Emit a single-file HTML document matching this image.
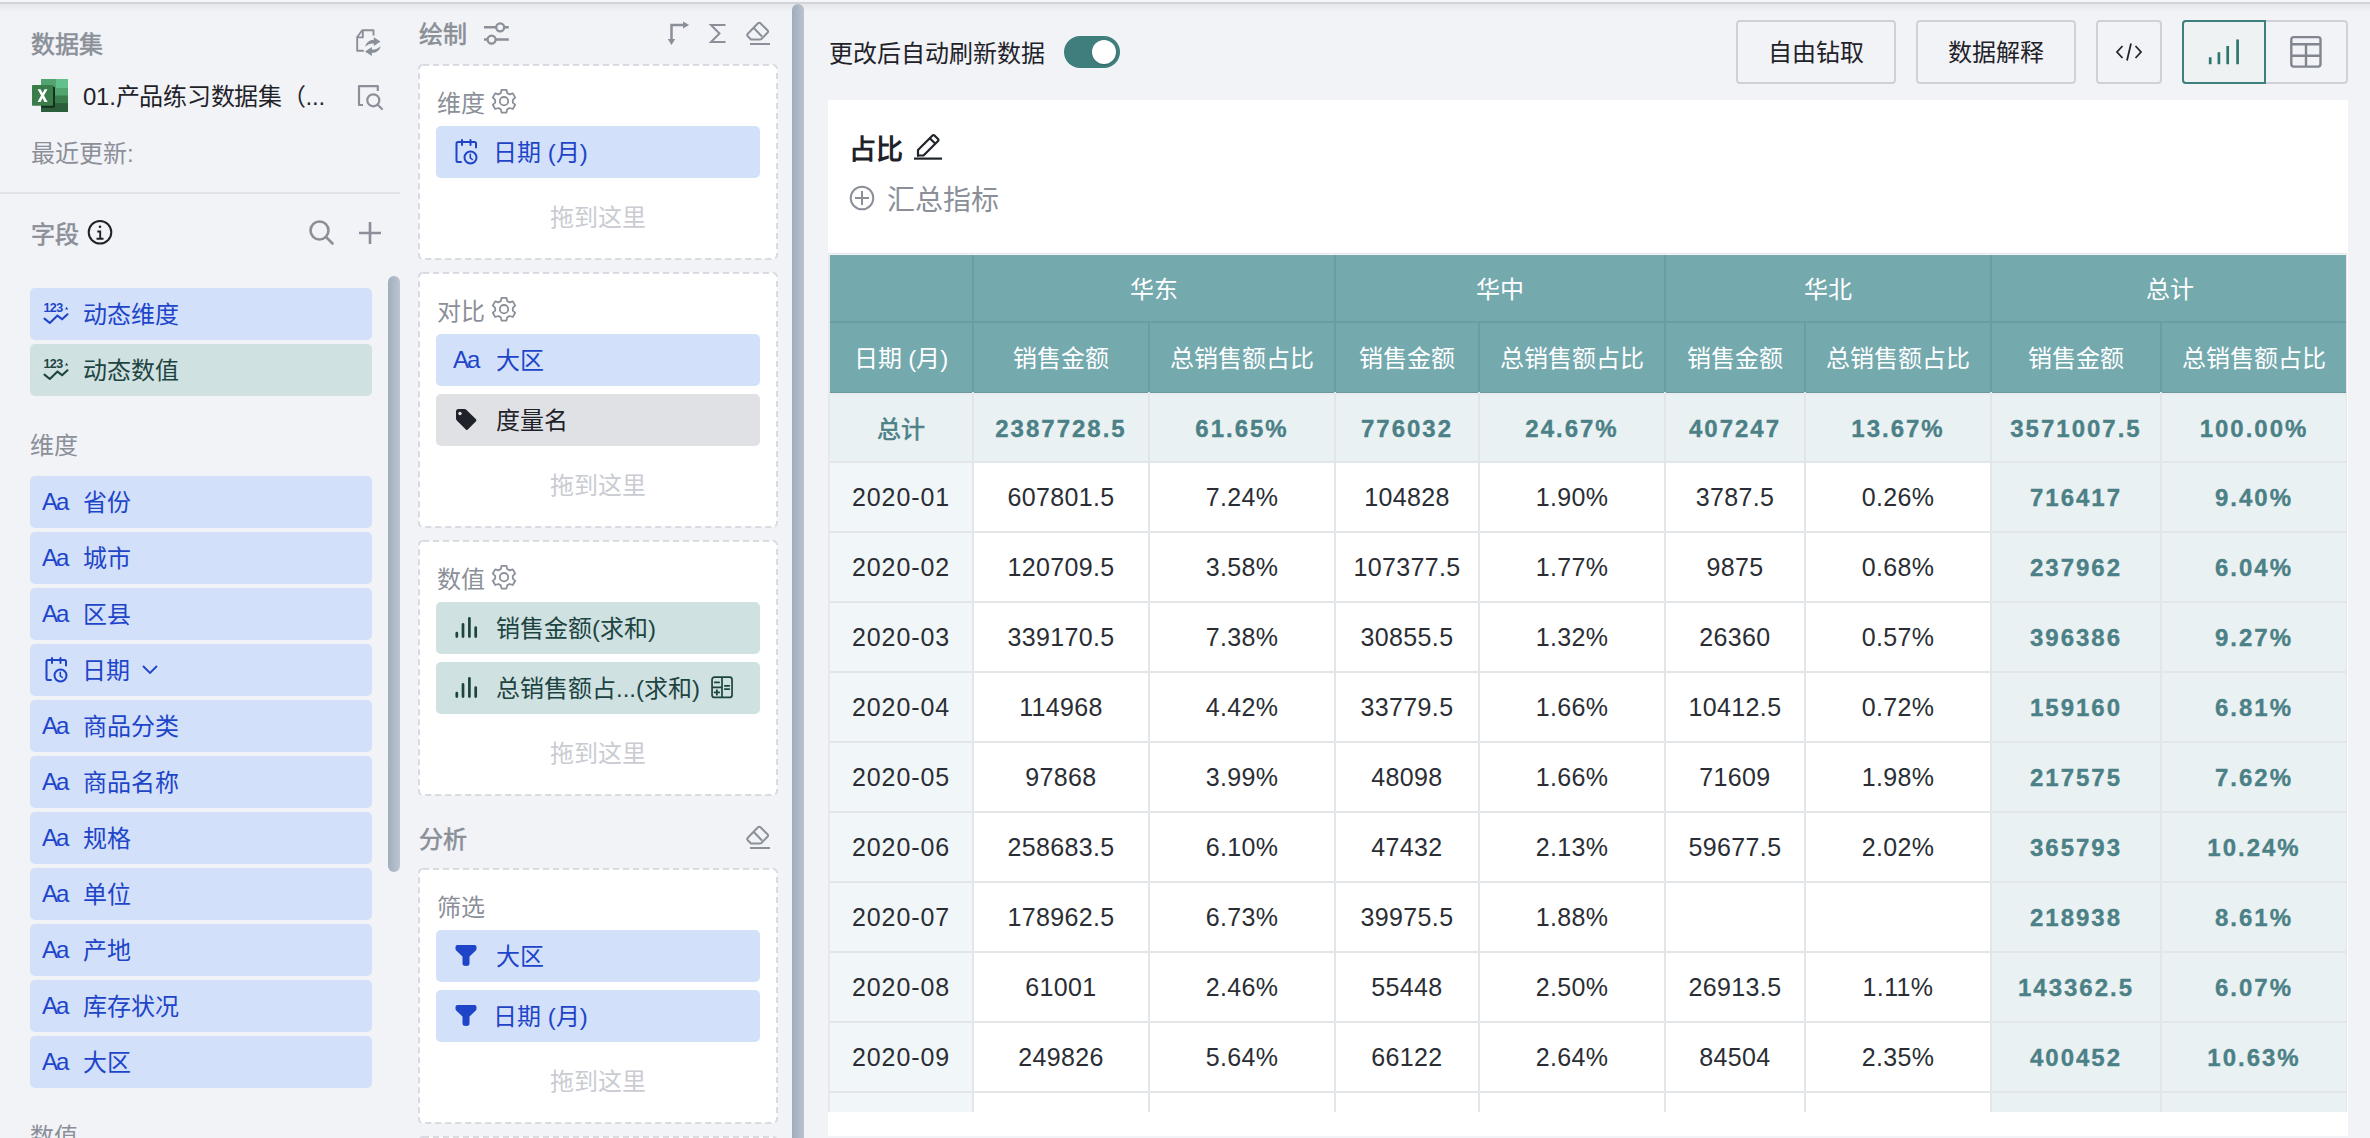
<!DOCTYPE html>
<html lang="zh-CN"><head><meta charset="utf-8">
<style>
*{box-sizing:border-box;margin:0;padding:0}
html,body{width:2370px;height:1138px;overflow:hidden;background:#f2f3f7;font-family:"Liberation Sans",sans-serif;}
.t{position:absolute;white-space:nowrap}
.s{position:absolute;overflow:visible}
.r{position:absolute}
.c{position:absolute;text-align:center;white-space:nowrap}
</style></head><body>

<div class="r" style="left:0px;top:0px;width:2370px;height:2px;background:#f5f6f9;"></div>
<div class="r" style="left:0px;top:2px;width:2370px;height:2px;background:#d1d4d9;"></div>
<div class="r" style="left:0px;top:4px;width:2370px;height:8px;background:linear-gradient(#e5e7eb,#f2f3f7);"></div>
<div class="t" style="left:31px;top:33px;font-size:24px;line-height:24px;color:#8a8f98;font-weight:normal;-webkit-text-stroke:0.6px #8a8f98;">数据集</div>
<svg class="s" style="left:352px;top:25px;" width="34" height="34" viewBox="0 0 34 34">
<path d="M21.5 10.5 V5.2 H10.2 L5.2 12 V25.7 H11.8 M10.8 5.2 V12.4 H5.2" fill="none" stroke="#8a8f98" stroke-width="1.9" stroke-linejoin="round"/>
<path d="M13.1 21.8 Q14.8 15.2 21.8 14.8 V12.2 L28.5 16.5 L21.8 20.9 V18.4 Q16.8 18.2 13.1 21.8 Z" fill="#8a8f98"/>
<path d="M28.8 21 Q27.2 27.7 19.8 28.1 V31.1 L13 26.5 L19.8 22.1 V24.6 Q25.2 24.7 28.8 21 Z" fill="#8a8f98"/>
</svg>
<svg class="s" style="left:32px;top:79px;" width="37" height="34" viewBox="0 0 37 34">
<rect x="9" y="0" width="27" height="33" fill="#2b5e3b"/>
<rect x="9" y="0" width="15" height="9" fill="#52a370"/>
<rect x="24" y="0" width="12" height="9" fill="#62c18a"/>
<rect x="9" y="9" width="27" height="7.8" fill="#50a46e"/>
<rect x="9" y="16.8" width="27" height="7.3" fill="#3a7e4c"/>
<rect x="9" y="7.5" width="14" height="21.3" rx="1.5" fill="#15301e"/>
<rect x="0" y="6" width="21" height="20.8" rx="0.8" fill="#3a7d4a"/>
<path d="M5.6 10.2 H8.6 L10.6 14 L12.6 10.2 H15.5 L12 16.5 L15.6 23 H12.5 L10.5 19.2 L8.5 23 H5.5 L9.1 16.5 Z" fill="#fff"/>
</svg>
<div class="t" style="left:83px;top:85px;font-size:24px;line-height:24px;color:#1f2329;font-weight:normal;letter-spacing:-0.25px;">01.产品练习数据集（...</div>
<svg class="s" style="left:356px;top:84px;" width="28" height="28" viewBox="0 0 28 28">
<path d="M7 21 H3 V2.2 H21.8 V7" fill="none" stroke="#8a8f98" stroke-width="2.2" stroke-linejoin="round"/>
<circle cx="17.3" cy="16.3" r="6" fill="none" stroke="#8a8f98" stroke-width="2.2"/>
<path d="M21.5 20.5 L26 25" stroke="#8a8f98" stroke-width="2.2" stroke-linecap="round"/>
</svg>
<div class="t" style="left:31px;top:142px;font-size:24px;line-height:24px;color:#8a8f98;font-weight:normal;">最近更新:</div>
<div class="r" style="left:0px;top:192px;width:400px;height:2px;background:#dfe2e7;"></div>
<div class="t" style="left:31px;top:223px;font-size:24px;line-height:24px;color:#8a8f98;font-weight:normal;-webkit-text-stroke:0.6px #8a8f98;">字段</div>
<svg class="s" style="left:87px;top:219px;" width="26" height="27" viewBox="0 0 26 27">
<circle cx="13" cy="13.3" r="11.3" fill="none" stroke="#1f2329" stroke-width="2"/>
<circle cx="13" cy="7.8" r="1.3" fill="#1f2329"/>
<path d="M10.3 12.5 H13.2 V19.6 M9.5 19.8 H16.5" fill="none" stroke="#1f2329" stroke-width="1.9"/>
</svg>
<svg class="s" style="left:307px;top:218px;" width="30" height="30" viewBox="0 0 30 30">
<circle cx="12.5" cy="12.5" r="9" fill="none" stroke="#8a8f98" stroke-width="2.6"/>
<path d="M19 19 L25.5 25.5" stroke="#8a8f98" stroke-width="2.6" stroke-linecap="round"/>
</svg>
<svg class="s" style="left:358px;top:221px;" width="25" height="25" viewBox="0 0 25 25"><path d="M12 1 V23 M1 12 H23" stroke="#8a8f98" stroke-width="2.6"/></svg>
<div class="r" style="left:388px;top:276px;width:12px;height:596px;border-radius:6px;background:linear-gradient(90deg,#a1aebe,#bcc5d0)"></div>
<div class="r" style="left:30px;top:288px;width:342px;height:52px;background:#d3e0fa;border-radius:5px"></div>
<svg class="s" style="left:42px;top:300px;" width="30" height="28" viewBox="0 0 30 28">
<text x="1.5" y="12" font-family="Liberation Sans" font-weight="bold" font-size="12.5" fill="#1e45c8" letter-spacing="-0.6">123</text>
<path d="M23 9.4 L24.6 6.8 L26.2 9.4 Z" fill="#1e45c8"/>
<path d="M2.5 18.6 L7.8 23 L15.5 15.6 L20.1 19.3 L25.5 14.3" fill="none" stroke="#1e45c8" stroke-width="2.1" stroke-linecap="round" stroke-linejoin="round"/>
</svg>
<div class="t" style="left:83px;top:303px;font-size:24px;line-height:24px;color:#1e45c8;font-weight:normal;">动态维度</div>
<div class="r" style="left:30px;top:344px;width:342px;height:52px;background:#cfe1e1;border-radius:5px"></div>
<svg class="s" style="left:42px;top:356px;" width="30" height="28" viewBox="0 0 30 28">
<text x="1.5" y="12" font-family="Liberation Sans" font-weight="bold" font-size="12.5" fill="#1e4441" letter-spacing="-0.6">123</text>
<path d="M23 9.4 L24.6 6.8 L26.2 9.4 Z" fill="#1e4441"/>
<path d="M2.5 18.6 L7.8 23 L15.5 15.6 L20.1 19.3 L25.5 14.3" fill="none" stroke="#1e4441" stroke-width="2.1" stroke-linecap="round" stroke-linejoin="round"/>
</svg>
<div class="t" style="left:83px;top:359px;font-size:24px;line-height:24px;color:#1e4441;font-weight:normal;">动态数值</div>
<div class="t" style="left:30px;top:434px;font-size:24px;line-height:24px;color:#8a8f98;font-weight:normal;">维度</div>
<div class="r" style="left:30px;top:476px;width:342px;height:52px;background:#d3e0fa;border-radius:5px"></div>
<div class="t" style="left:42px;top:490px;font-size:24px;line-height:24px;color:#1e45c8;letter-spacing:-2px">Aa</div>
<div class="t" style="left:83px;top:491px;font-size:24px;line-height:24px;color:#1e45c8;font-weight:normal;">省份</div>
<div class="r" style="left:30px;top:532px;width:342px;height:52px;background:#d3e0fa;border-radius:5px"></div>
<div class="t" style="left:42px;top:546px;font-size:24px;line-height:24px;color:#1e45c8;letter-spacing:-2px">Aa</div>
<div class="t" style="left:83px;top:547px;font-size:24px;line-height:24px;color:#1e45c8;font-weight:normal;">城市</div>
<div class="r" style="left:30px;top:588px;width:342px;height:52px;background:#d3e0fa;border-radius:5px"></div>
<div class="t" style="left:42px;top:602px;font-size:24px;line-height:24px;color:#1e45c8;letter-spacing:-2px">Aa</div>
<div class="t" style="left:83px;top:603px;font-size:24px;line-height:24px;color:#1e45c8;font-weight:normal;">区县</div>
<div class="r" style="left:30px;top:644px;width:342px;height:52px;background:#d3e0fa;border-radius:5px"></div>
<svg class="s" style="left:44.5px;top:656px;" width="28" height="30" viewBox="0 0 28 30">
<path d="M6 24 H3 Q1.5 24 1.5 22.5 V5.5 Q1.5 4 3 4 H19.5 Q21 4 21 5.5 V9.5" fill="none" stroke="#1e45c8" stroke-width="2" stroke-linecap="round"/>
<path d="M7 2 V7 M15.5 2 V7" stroke="#1e45c8" stroke-width="2" stroke-linecap="round"/>
<circle cx="15.5" cy="19.5" r="6" fill="none" stroke="#1e45c8" stroke-width="2"/>
<path d="M15.3 16.3 V19.8 L17.3 21.5" fill="none" stroke="#1e45c8" stroke-width="1.6" stroke-linecap="round"/>
</svg>
<div class="t" style="left:82px;top:659px;font-size:24px;line-height:24px;color:#1e45c8;font-weight:normal;">日期</div>
<svg class="s" style="left:141px;top:664px;" width="18" height="12" viewBox="0 0 18 12"><path d="M2 2 L9 9 L16 2" fill="none" stroke="#1e45c8" stroke-width="1.8"/></svg>
<div class="r" style="left:30px;top:700px;width:342px;height:52px;background:#d3e0fa;border-radius:5px"></div>
<div class="t" style="left:42px;top:714px;font-size:24px;line-height:24px;color:#1e45c8;letter-spacing:-2px">Aa</div>
<div class="t" style="left:83px;top:715px;font-size:24px;line-height:24px;color:#1e45c8;font-weight:normal;">商品分类</div>
<div class="r" style="left:30px;top:756px;width:342px;height:52px;background:#d3e0fa;border-radius:5px"></div>
<div class="t" style="left:42px;top:770px;font-size:24px;line-height:24px;color:#1e45c8;letter-spacing:-2px">Aa</div>
<div class="t" style="left:83px;top:771px;font-size:24px;line-height:24px;color:#1e45c8;font-weight:normal;">商品名称</div>
<div class="r" style="left:30px;top:812px;width:342px;height:52px;background:#d3e0fa;border-radius:5px"></div>
<div class="t" style="left:42px;top:826px;font-size:24px;line-height:24px;color:#1e45c8;letter-spacing:-2px">Aa</div>
<div class="t" style="left:83px;top:827px;font-size:24px;line-height:24px;color:#1e45c8;font-weight:normal;">规格</div>
<div class="r" style="left:30px;top:868px;width:342px;height:52px;background:#d3e0fa;border-radius:5px"></div>
<div class="t" style="left:42px;top:882px;font-size:24px;line-height:24px;color:#1e45c8;letter-spacing:-2px">Aa</div>
<div class="t" style="left:83px;top:883px;font-size:24px;line-height:24px;color:#1e45c8;font-weight:normal;">单位</div>
<div class="r" style="left:30px;top:924px;width:342px;height:52px;background:#d3e0fa;border-radius:5px"></div>
<div class="t" style="left:42px;top:938px;font-size:24px;line-height:24px;color:#1e45c8;letter-spacing:-2px">Aa</div>
<div class="t" style="left:83px;top:939px;font-size:24px;line-height:24px;color:#1e45c8;font-weight:normal;">产地</div>
<div class="r" style="left:30px;top:980px;width:342px;height:52px;background:#d3e0fa;border-radius:5px"></div>
<div class="t" style="left:42px;top:994px;font-size:24px;line-height:24px;color:#1e45c8;letter-spacing:-2px">Aa</div>
<div class="t" style="left:83px;top:995px;font-size:24px;line-height:24px;color:#1e45c8;font-weight:normal;">库存状况</div>
<div class="r" style="left:30px;top:1036px;width:342px;height:52px;background:#d3e0fa;border-radius:5px"></div>
<div class="t" style="left:42px;top:1050px;font-size:24px;line-height:24px;color:#1e45c8;letter-spacing:-2px">Aa</div>
<div class="t" style="left:83px;top:1051px;font-size:24px;line-height:24px;color:#1e45c8;font-weight:normal;">大区</div>
<div class="t" style="left:30px;top:1125px;font-size:24px;line-height:24px;color:#8a8f98;font-weight:normal;">数值</div>
<div class="t" style="left:419px;top:23px;font-size:24px;line-height:24px;color:#8a8f98;font-weight:normal;-webkit-text-stroke:0.6px #8a8f98;">绘制</div>
<svg class="s" style="left:481px;top:20px;" width="30" height="28" viewBox="0 0 30 28">
<path d="M3 7.3 H27.8 M3 19.6 H27.8" stroke="#8a8f98" stroke-width="2.5"/>
<circle cx="19.2" cy="7.3" r="4" fill="#f2f3f7" stroke="#8a8f98" stroke-width="2.3"/>
<circle cx="10.6" cy="19.6" r="4" fill="#f2f3f7" stroke="#8a8f98" stroke-width="2.3"/>
</svg>
<svg class="s" style="left:665px;top:19px;" width="28" height="28" viewBox="0 0 28 28">
<path d="M6.5 21 V6 H19" fill="none" stroke="#8a8f98" stroke-width="2.5"/>
<path d="M2.8 20 H10.2 L6.5 26 Z M18 2.6 L24.2 6 L18 9.6 Z" fill="#8a8f98"/>
</svg>
<svg class="s" style="left:708px;top:22px;" width="20" height="24" viewBox="0 0 20 24"><path d="M17.5 3 H3 L11.5 11.5 L3 20 H17.5" fill="none" stroke="#8a8f98" stroke-width="2"/></svg>
<svg class="s" style="left:745px;top:20px;" width="28" height="28" viewBox="0 0 28 28">
<path d="M6 19.5 L2.8 16.3 Q1.6 15 2.8 13.8 L13 3.3 Q14.3 2 15.5 3.3 L22.5 10.3 Q23.8 11.5 22.5 12.8 L16.3 19 Q15.7 19.5 15 19.5 Z" fill="none" stroke="#8a8f98" stroke-width="2"/>
<path d="M8.8 8 L17 16.5" stroke="#8a8f98" stroke-width="2"/>
<path d="M5 24 H25" stroke="#8a8f98" stroke-width="2"/>
</svg>
<svg class="s" style="left:418px;top:64px;" width="360" height="196" viewBox="0 0 360 196"><rect x="1" y="1" width="358" height="194" rx="4" fill="#fff" stroke="#d8dbe0" stroke-width="2" stroke-dasharray="6 4"/></svg>
<div class="t" style="left:437px;top:92px;font-size:24px;line-height:24px;color:#8a8f98;font-weight:normal;">维度</div>
<svg class="s" style="left:491px;top:88px;" width="26" height="26" viewBox="0 0 26 26">
<path d="M10.6 1.8 H15.4 L16.2 5 L18.6 6.4 L21.8 5.4 L24.2 9.6 L21.8 11.8 V14.6 L24.2 16.8 L21.8 21 L18.6 20 L16.2 21.4 L15.4 24.6 H10.6 L9.8 21.4 L7.4 20 L4.2 21 L1.8 16.8 L4.2 14.6 V11.8 L1.8 9.6 L4.2 5.4 L7.4 6.4 L9.8 5 Z" fill="none" stroke="#8a8f98" stroke-width="1.8" stroke-linejoin="round"/>
<circle cx="13" cy="13.2" r="4.2" fill="none" stroke="#8a8f98" stroke-width="1.8"/>
</svg>
<div class="r" style="left:436px;top:126px;width:324px;height:52px;background:#d3e0fa;border-radius:5px"></div>
<svg class="s" style="left:455px;top:138px;" width="28" height="30" viewBox="0 0 28 30">
<path d="M6 24 H3 Q1.5 24 1.5 22.5 V5.5 Q1.5 4 3 4 H19.5 Q21 4 21 5.5 V9.5" fill="none" stroke="#1e45c8" stroke-width="2" stroke-linecap="round"/>
<path d="M7 2 V7 M15.5 2 V7" stroke="#1e45c8" stroke-width="2" stroke-linecap="round"/>
<circle cx="15.5" cy="19.5" r="6" fill="none" stroke="#1e45c8" stroke-width="2"/>
<path d="M15.3 16.3 V19.8 L17.3 21.5" fill="none" stroke="#1e45c8" stroke-width="1.6" stroke-linecap="round"/>
</svg>
<div class="t" style="left:493px;top:141px;font-size:24px;line-height:24px;color:#1e45c8;font-weight:normal;">日期 (月)</div>
<div class="c" style="left:418px;top:206px;width:360px;font-size:24px;line-height:24px;color:#c9ccd2">拖到这里</div>
<svg class="s" style="left:418px;top:272px;" width="360" height="256" viewBox="0 0 360 256"><rect x="1" y="1" width="358" height="254" rx="4" fill="#fff" stroke="#d8dbe0" stroke-width="2" stroke-dasharray="6 4"/></svg>
<div class="t" style="left:437px;top:300px;font-size:24px;line-height:24px;color:#8a8f98;font-weight:normal;">对比</div>
<svg class="s" style="left:491px;top:296px;" width="26" height="26" viewBox="0 0 26 26">
<path d="M10.6 1.8 H15.4 L16.2 5 L18.6 6.4 L21.8 5.4 L24.2 9.6 L21.8 11.8 V14.6 L24.2 16.8 L21.8 21 L18.6 20 L16.2 21.4 L15.4 24.6 H10.6 L9.8 21.4 L7.4 20 L4.2 21 L1.8 16.8 L4.2 14.6 V11.8 L1.8 9.6 L4.2 5.4 L7.4 6.4 L9.8 5 Z" fill="none" stroke="#8a8f98" stroke-width="1.8" stroke-linejoin="round"/>
<circle cx="13" cy="13.2" r="4.2" fill="none" stroke="#8a8f98" stroke-width="1.8"/>
</svg>
<div class="r" style="left:436px;top:334px;width:324px;height:52px;background:#d3e0fa;border-radius:5px"></div>
<div class="t" style="left:453px;top:348px;font-size:24px;line-height:24px;color:#1e45c8;letter-spacing:-2px">Aa</div>
<div class="t" style="left:496px;top:349px;font-size:24px;line-height:24px;color:#1e45c8;font-weight:normal;">大区</div>
<div class="r" style="left:436px;top:394px;width:324px;height:52px;background:#dfe1e5;border-radius:5px"></div>
<svg class="s" style="left:454px;top:407px;" width="26" height="26" viewBox="0 0 26 26"><path d="M2 4.5 Q2 2 4.5 2 H10.5 Q11.5 2 12.3 2.8 L22 12.3 Q23 13.3 22 14.3 L13.8 22.5 Q12.8 23.5 11.8 22.5 L2.8 13.5 Q2 12.7 2 11.5 Z" fill="#1f2329"/><circle cx="6" cy="6.5" r="1.7" fill="#dfe1e5"/></svg>
<div class="t" style="left:496px;top:409px;font-size:24px;line-height:24px;color:#1f2329;font-weight:normal;">度量名</div>
<div class="c" style="left:418px;top:474px;width:360px;font-size:24px;line-height:24px;color:#c9ccd2">拖到这里</div>
<svg class="s" style="left:418px;top:540px;" width="360" height="256" viewBox="0 0 360 256"><rect x="1" y="1" width="358" height="254" rx="4" fill="#fff" stroke="#d8dbe0" stroke-width="2" stroke-dasharray="6 4"/></svg>
<div class="t" style="left:437px;top:568px;font-size:24px;line-height:24px;color:#8a8f98;font-weight:normal;">数值</div>
<svg class="s" style="left:491px;top:564px;" width="26" height="26" viewBox="0 0 26 26">
<path d="M10.6 1.8 H15.4 L16.2 5 L18.6 6.4 L21.8 5.4 L24.2 9.6 L21.8 11.8 V14.6 L24.2 16.8 L21.8 21 L18.6 20 L16.2 21.4 L15.4 24.6 H10.6 L9.8 21.4 L7.4 20 L4.2 21 L1.8 16.8 L4.2 14.6 V11.8 L1.8 9.6 L4.2 5.4 L7.4 6.4 L9.8 5 Z" fill="none" stroke="#8a8f98" stroke-width="1.8" stroke-linejoin="round"/>
<circle cx="13" cy="13.2" r="4.2" fill="none" stroke="#8a8f98" stroke-width="1.8"/>
</svg>
<div class="r" style="left:436px;top:602px;width:324px;height:52px;background:#cfe1e1;border-radius:5px"></div>
<svg class="s" style="left:454px;top:617px;" width="26" height="26" viewBox="0 0 26 26"><path d="M2.8 16 V19.6 M9 7.3 V19.6 M15.4 1.3 V19.6 M21.7 10.6 V19.6" stroke="#1e4441" stroke-width="2.7" stroke-linecap="round"/></svg>
<div class="t" style="left:496px;top:617px;font-size:24px;line-height:24px;color:#1e4441;font-weight:normal;">销售金额(求和)</div>
<div class="r" style="left:436px;top:662px;width:324px;height:52px;background:#cfe1e1;border-radius:5px"></div>
<svg class="s" style="left:454px;top:677px;" width="26" height="26" viewBox="0 0 26 26"><path d="M2.8 16 V19.6 M9 7.3 V19.6 M15.4 1.3 V19.6 M21.7 10.6 V19.6" stroke="#1e4441" stroke-width="2.7" stroke-linecap="round"/></svg>
<div class="t" style="left:496px;top:677px;font-size:24px;line-height:24px;color:#1e4441;font-weight:normal;">总销售额占...(求和)</div>
<svg class="s" style="left:709px;top:675px;" width="26" height="26" viewBox="0 0 26 26"><rect x="3.05" y="2.2" width="20" height="20.2" rx="2.5" fill="none" stroke="#1e4441" stroke-width="1.7"/><path d="M13 2.2 V22.4 M3 12.3 H13" stroke="#1e4441" stroke-width="1.7"/><path d="M5.8 7.4 H10.1 M5.6 17.4 H10.2 M7.9 15.1 V19.7 M15.8 10.8 H20.3 M15.8 14.1 H20.3" stroke="#1e4441" stroke-width="1.8" stroke-linecap="round"/></svg>
<div class="c" style="left:418px;top:742px;width:360px;font-size:24px;line-height:24px;color:#c9ccd2">拖到这里</div>
<div class="t" style="left:419px;top:828px;font-size:24px;line-height:24px;color:#8a8f98;font-weight:normal;-webkit-text-stroke:0.6px #8a8f98;">分析</div>
<svg class="s" style="left:745px;top:824px;" width="28" height="28" viewBox="0 0 28 28">
<path d="M6 19.5 L2.8 16.3 Q1.6 15 2.8 13.8 L13 3.3 Q14.3 2 15.5 3.3 L22.5 10.3 Q23.8 11.5 22.5 12.8 L16.3 19 Q15.7 19.5 15 19.5 Z" fill="none" stroke="#8a8f98" stroke-width="2"/>
<path d="M8.8 8 L17 16.5" stroke="#8a8f98" stroke-width="2"/>
<path d="M5 24 H25" stroke="#8a8f98" stroke-width="2"/>
</svg>
<svg class="s" style="left:418px;top:868px;" width="360" height="256" viewBox="0 0 360 256"><rect x="1" y="1" width="358" height="254" rx="4" fill="#fff" stroke="#d8dbe0" stroke-width="2" stroke-dasharray="6 4"/></svg>
<div class="t" style="left:437px;top:896px;font-size:24px;line-height:24px;color:#8a8f98;font-weight:normal;">筛选</div>
<div class="r" style="left:436px;top:930px;width:324px;height:52px;background:#d3e0fa;border-radius:5px"></div>
<svg class="s" style="left:454px;top:944px;" width="24" height="24" viewBox="0 0 24 24"><path d="M1.5 3 Q1.5 1 3.5 1 H20.5 Q22.5 1 22.5 3 V4.8 Q22.5 5.8 21.8 6.5 L15.5 12.6 V19.5 Q15.5 22 12 22 Q8.5 22 8.5 19.5 V12.6 L2.2 6.5 Q1.5 5.8 1.5 4.8 Z" fill="#1e45c8"/></svg>
<div class="t" style="left:496px;top:945px;font-size:24px;line-height:24px;color:#1e45c8;font-weight:normal;">大区</div>
<div class="r" style="left:436px;top:990px;width:324px;height:52px;background:#d3e0fa;border-radius:5px"></div>
<svg class="s" style="left:454px;top:1004px;" width="24" height="24" viewBox="0 0 24 24"><path d="M1.5 3 Q1.5 1 3.5 1 H20.5 Q22.5 1 22.5 3 V4.8 Q22.5 5.8 21.8 6.5 L15.5 12.6 V19.5 Q15.5 22 12 22 Q8.5 22 8.5 19.5 V12.6 L2.2 6.5 Q1.5 5.8 1.5 4.8 Z" fill="#1e45c8"/></svg>
<div class="t" style="left:493px;top:1005px;font-size:24px;line-height:24px;color:#1e45c8;font-weight:normal;">日期 (月)</div>
<div class="c" style="left:418px;top:1070px;width:360px;font-size:24px;line-height:24px;color:#c9ccd2">拖到这里</div>
<svg class="s" style="left:418px;top:1136px;" width="360" height="120" viewBox="0 0 360 120"><rect x="1" y="1" width="358" height="118" rx="4" fill="#fff" stroke="#d8dbe0" stroke-width="2" stroke-dasharray="6 4"/></svg>
<div class="r" style="left:792px;top:4px;width:12px;height:1150px;border-radius:6px;background:linear-gradient(90deg,#9facbd,#bac3cf)"></div>
<div class="t" style="left:829px;top:42px;font-size:24px;line-height:24px;color:#1f2329;font-weight:normal;">更改后自动刷新数据</div>
<div class="r" style="left:1064px;top:36px;width:56px;height:32px;border-radius:16px;background:#3e7f7d"></div>
<div class="r" style="left:1092px;top:40px;width:24px;height:24px;border-radius:12px;background:#fff;box-shadow:0 1px 2px rgba(0,0,0,.2)"></div>
<div class="r" style="left:1736px;top:20px;width:160px;height:64px;border:2px solid #cdd2d9;border-radius:4px"></div>
<div class="c" style="left:1736px;top:41px;width:160px;font-size:24px;line-height:24px;color:#1f2329">自由钻取</div>
<div class="r" style="left:1916px;top:20px;width:160px;height:64px;border:2px solid #cdd2d9;border-radius:4px"></div>
<div class="c" style="left:1916px;top:41px;width:160px;font-size:24px;line-height:24px;color:#1f2329">数据解释</div>
<div class="r" style="left:2096px;top:20px;width:66px;height:64px;border:2px solid #cdd2d9;border-radius:4px"></div>
<svg class="s" style="left:2115px;top:40px;" width="28" height="24" viewBox="0 0 28 24"><path d="M7.5 6 L2 12 L7.5 18 M20.5 6 L26 12 L20.5 18 M16 3.5 L12 20.5" fill="none" stroke="#1f2329" stroke-width="1.75"/></svg>
<div class="r" style="left:2182px;top:20px;width:166px;height:64px;border:2px solid #cdd2d9;border-radius:4px"></div>
<div class="r" style="left:2182px;top:20px;width:84px;height:64px;border:2px solid #3e7f7d;border-radius:4px 0 0 4px;background:#eef2f3"></div>
<svg class="s" style="left:2205px;top:34px;" width="40" height="34" viewBox="0 0 40 34"><path d="M5.2 23.2 V30.3 M13.9 18.2 V30.3 M22.7 12 V30.3 M32.6 5.5 V30.3" stroke="#2f7570" stroke-width="2.7"/></svg>
<svg class="s" style="left:2288px;top:34px;" width="36" height="36" viewBox="0 0 36 36"><rect x="3.3" y="3.1" width="29.2" height="29.5" rx="2.5" fill="none" stroke="#80858e" stroke-width="2.4"/><path d="M3.3 10.2 H32.5 M3.3 21.7 H32.5 M18 10.2 V32.6" stroke="#80858e" stroke-width="2.4"/></svg>
<div class="r" style="left:828px;top:100px;width:1520px;height:1036px;background:#fff;"></div>
<div class="t" style="left:849px;top:137px;font-size:27px;line-height:27px;color:#1f2329;font-weight:bold;">占比</div>
<svg class="s" style="left:911px;top:131px;" width="32" height="32" viewBox="0 0 32 32"><path d="M7 25 V19 L21.5 4.5 Q22.5 3.5 23.5 4.5 L27 8 Q28 9 27 10 L12.5 24.5 H7 Z M18.8 7.2 L24.3 12.7" fill="none" stroke="#1f2329" stroke-width="2.2" stroke-linejoin="round"/><path d="M3 27.6 H31" stroke="#1f2329" stroke-width="2.2"/></svg>
<svg class="s" style="left:848px;top:184px;" width="28" height="28" viewBox="0 0 28 28"><circle cx="14" cy="14" r="11.3" fill="none" stroke="#8a8f98" stroke-width="2"/><path d="M14 7 V21 M7 14 H21" stroke="#8a8f98" stroke-width="2"/></svg>
<div class="t" style="left:887px;top:187px;font-size:28px;line-height:28px;color:#8a8f98;font-weight:normal;">汇总指标</div>
<div class="r" style="left:828px;top:253px;width:1520px;height:1px;background:#e3e6e9;"></div>
<div class="r" style="left:828px;top:253px;width:2px;height:859px;background:#e6e9ec;"></div>
<div class="r" style="left:829px;top:254px;width:1518px;height:1px;background:#f3f5f6;"></div>
<div class="r" style="left:830px;top:255px;width:1516px;height:137px;background:#74a9ae;"></div>
<div class="r" style="left:830px;top:321px;width:1516px;height:2px;background:#6b9ea4;"></div>
<div class="r" style="left:972px;top:255px;width:2px;height:66px;background:#6b9ea4;"></div>
<div class="r" style="left:1334px;top:255px;width:2px;height:66px;background:#6b9ea4;"></div>
<div class="r" style="left:1664px;top:255px;width:2px;height:66px;background:#6b9ea4;"></div>
<div class="r" style="left:1990px;top:255px;width:2px;height:66px;background:#6b9ea4;"></div>
<div class="r" style="left:972px;top:323px;width:2px;height:69px;background:#6b9ea4;"></div>
<div class="r" style="left:1148px;top:323px;width:2px;height:69px;background:#6b9ea4;"></div>
<div class="r" style="left:1334px;top:323px;width:2px;height:69px;background:#6b9ea4;"></div>
<div class="r" style="left:1478px;top:323px;width:2px;height:69px;background:#6b9ea4;"></div>
<div class="r" style="left:1664px;top:323px;width:2px;height:69px;background:#6b9ea4;"></div>
<div class="r" style="left:1804px;top:323px;width:2px;height:69px;background:#6b9ea4;"></div>
<div class="r" style="left:1990px;top:323px;width:2px;height:69px;background:#6b9ea4;"></div>
<div class="r" style="left:2160px;top:323px;width:2px;height:69px;background:#6b9ea4;"></div>
<div class="r" style="left:830px;top:392px;width:1517px;height:720px;background:#ffffff;"></div>
<div class="r" style="left:830px;top:392px;width:142px;height:720px;background:#f1f6f9;"></div>
<div class="r" style="left:1992px;top:392px;width:355px;height:720px;background:#eaf1f3;"></div>
<div class="r" style="left:830px;top:392px;width:1517px;height:69px;background:#eaf1f3;"></div>
<div class="r" style="left:830px;top:392px;width:1516px;height:1px;background:#6a9ba1;"></div>
<div class="r" style="left:830px;top:393px;width:1517px;height:2px;background:#e9ecee;"></div>
<div class="r" style="left:830px;top:461px;width:1517px;height:2px;background:#e3e6e9;"></div>
<div class="r" style="left:830px;top:531px;width:1517px;height:2px;background:#e3e6e9;"></div>
<div class="r" style="left:830px;top:601px;width:1517px;height:2px;background:#e3e6e9;"></div>
<div class="r" style="left:830px;top:671px;width:1517px;height:2px;background:#e3e6e9;"></div>
<div class="r" style="left:830px;top:741px;width:1517px;height:2px;background:#e3e6e9;"></div>
<div class="r" style="left:830px;top:811px;width:1517px;height:2px;background:#e3e6e9;"></div>
<div class="r" style="left:830px;top:881px;width:1517px;height:2px;background:#e3e6e9;"></div>
<div class="r" style="left:830px;top:951px;width:1517px;height:2px;background:#e3e6e9;"></div>
<div class="r" style="left:830px;top:1021px;width:1517px;height:2px;background:#e3e6e9;"></div>
<div class="r" style="left:830px;top:1091px;width:1517px;height:2px;background:#e3e6e9;"></div>
<div class="r" style="left:830px;top:1161px;width:1517px;height:2px;background:#e3e6e9;"></div>
<div class="r" style="left:972px;top:392px;width:2px;height:720px;background:#e3e6e9;"></div>
<div class="r" style="left:1148px;top:392px;width:2px;height:720px;background:#e3e6e9;"></div>
<div class="r" style="left:1334px;top:392px;width:2px;height:720px;background:#e3e6e9;"></div>
<div class="r" style="left:1478px;top:392px;width:2px;height:720px;background:#e3e6e9;"></div>
<div class="r" style="left:1664px;top:392px;width:2px;height:720px;background:#e3e6e9;"></div>
<div class="r" style="left:1804px;top:392px;width:2px;height:720px;background:#e3e6e9;"></div>
<div class="r" style="left:1990px;top:392px;width:2px;height:720px;background:#e3e6e9;"></div>
<div class="r" style="left:2160px;top:392px;width:2px;height:720px;background:#e3e6e9;"></div>
<div class="r" style="left:2346px;top:253px;width:1px;height:859px;background:#e3e6e9;"></div>
<div class="r" style="left:2347px;top:253px;width:1px;height:859px;background:#ffffff;"></div>
<div class="c" style="left:974px;top:278px;width:360px;font-size:24px;line-height:24px;color:#fff">华东</div>
<div class="c" style="left:1336px;top:278px;width:328px;font-size:24px;line-height:24px;color:#fff">华中</div>
<div class="c" style="left:1666px;top:278px;width:324px;font-size:24px;line-height:24px;color:#fff">华北</div>
<div class="c" style="left:1992px;top:278px;width:355px;font-size:24px;line-height:24px;color:#fff">总计</div>
<div class="c" style="left:830px;top:347px;width:142px;font-size:24px;line-height:24px;color:#fff">日期 (月)</div>
<div class="c" style="left:974px;top:347px;width:174px;font-size:24px;line-height:24px;color:#fff">销售金额</div>
<div class="c" style="left:1150px;top:347px;width:184px;font-size:24px;line-height:24px;color:#fff">总销售额占比</div>
<div class="c" style="left:1336px;top:347px;width:142px;font-size:24px;line-height:24px;color:#fff">销售金额</div>
<div class="c" style="left:1480px;top:347px;width:184px;font-size:24px;line-height:24px;color:#fff">总销售额占比</div>
<div class="c" style="left:1666px;top:347px;width:138px;font-size:24px;line-height:24px;color:#fff">销售金额</div>
<div class="c" style="left:1806px;top:347px;width:184px;font-size:24px;line-height:24px;color:#fff">总销售额占比</div>
<div class="c" style="left:1992px;top:347px;width:168px;font-size:24px;line-height:24px;color:#fff">销售金额</div>
<div class="c" style="left:2162px;top:347px;width:184px;font-size:24px;line-height:24px;color:#fff">总销售额占比</div>
<div class="c" style="left:830px;top:418px;width:142px;font-size:24px;line-height:24px;color:#4b8186;-webkit-text-stroke:0.6px #4b8186">总计</div>
<div class="c" style="left:974px;top:417px;width:174px;font-size:24px;line-height:24px;color:#4b8186;font-weight:bold;letter-spacing:2px;-webkit-text-stroke:0.35px #4b8186;">2387728.5</div>
<div class="c" style="left:1150px;top:417px;width:184px;font-size:24px;line-height:24px;color:#4b8186;font-weight:bold;letter-spacing:2px;-webkit-text-stroke:0.35px #4b8186;">61.65%</div>
<div class="c" style="left:1336px;top:417px;width:142px;font-size:24px;line-height:24px;color:#4b8186;font-weight:bold;letter-spacing:2px;-webkit-text-stroke:0.35px #4b8186;">776032</div>
<div class="c" style="left:1480px;top:417px;width:184px;font-size:24px;line-height:24px;color:#4b8186;font-weight:bold;letter-spacing:2px;-webkit-text-stroke:0.35px #4b8186;">24.67%</div>
<div class="c" style="left:1666px;top:417px;width:138px;font-size:24px;line-height:24px;color:#4b8186;font-weight:bold;letter-spacing:2px;-webkit-text-stroke:0.35px #4b8186;">407247</div>
<div class="c" style="left:1806px;top:417px;width:184px;font-size:24px;line-height:24px;color:#4b8186;font-weight:bold;letter-spacing:2px;-webkit-text-stroke:0.35px #4b8186;">13.67%</div>
<div class="c" style="left:1992px;top:417px;width:168px;font-size:24px;line-height:24px;color:#4b8186;font-weight:bold;letter-spacing:2px;-webkit-text-stroke:0.35px #4b8186;">3571007.5</div>
<div class="c" style="left:2162px;top:417px;width:184px;font-size:24px;line-height:24px;color:#4b8186;font-weight:bold;letter-spacing:2px;-webkit-text-stroke:0.35px #4b8186;">100.00%</div>
<div class="c" style="left:830px;top:485px;width:142px;font-size:25px;line-height:24px;color:#2a2e34;font-weight:normal;letter-spacing:0.9px;">2020-01</div>
<div class="c" style="left:974px;top:485px;width:174px;font-size:25px;line-height:24px;color:#2a2e34;font-weight:normal;letter-spacing:0.35px;">607801.5</div>
<div class="c" style="left:1150px;top:485px;width:184px;font-size:25px;line-height:24px;color:#2a2e34;font-weight:normal;letter-spacing:0.35px;">7.24%</div>
<div class="c" style="left:1336px;top:485px;width:142px;font-size:25px;line-height:24px;color:#2a2e34;font-weight:normal;letter-spacing:0.35px;">104828</div>
<div class="c" style="left:1480px;top:485px;width:184px;font-size:25px;line-height:24px;color:#2a2e34;font-weight:normal;letter-spacing:0.35px;">1.90%</div>
<div class="c" style="left:1666px;top:485px;width:138px;font-size:25px;line-height:24px;color:#2a2e34;font-weight:normal;letter-spacing:0.35px;">3787.5</div>
<div class="c" style="left:1806px;top:485px;width:184px;font-size:25px;line-height:24px;color:#2a2e34;font-weight:normal;letter-spacing:0.35px;">0.26%</div>
<div class="c" style="left:1992px;top:486px;width:168px;font-size:24px;line-height:24px;color:#4b8186;font-weight:bold;letter-spacing:2px;-webkit-text-stroke:0.35px #4b8186;">716417</div>
<div class="c" style="left:2162px;top:486px;width:184px;font-size:24px;line-height:24px;color:#4b8186;font-weight:bold;letter-spacing:2px;-webkit-text-stroke:0.35px #4b8186;">9.40%</div>
<div class="c" style="left:830px;top:555px;width:142px;font-size:25px;line-height:24px;color:#2a2e34;font-weight:normal;letter-spacing:0.9px;">2020-02</div>
<div class="c" style="left:974px;top:555px;width:174px;font-size:25px;line-height:24px;color:#2a2e34;font-weight:normal;letter-spacing:0.35px;">120709.5</div>
<div class="c" style="left:1150px;top:555px;width:184px;font-size:25px;line-height:24px;color:#2a2e34;font-weight:normal;letter-spacing:0.35px;">3.58%</div>
<div class="c" style="left:1336px;top:555px;width:142px;font-size:25px;line-height:24px;color:#2a2e34;font-weight:normal;letter-spacing:0.35px;">107377.5</div>
<div class="c" style="left:1480px;top:555px;width:184px;font-size:25px;line-height:24px;color:#2a2e34;font-weight:normal;letter-spacing:0.35px;">1.77%</div>
<div class="c" style="left:1666px;top:555px;width:138px;font-size:25px;line-height:24px;color:#2a2e34;font-weight:normal;letter-spacing:0.35px;">9875</div>
<div class="c" style="left:1806px;top:555px;width:184px;font-size:25px;line-height:24px;color:#2a2e34;font-weight:normal;letter-spacing:0.35px;">0.68%</div>
<div class="c" style="left:1992px;top:556px;width:168px;font-size:24px;line-height:24px;color:#4b8186;font-weight:bold;letter-spacing:2px;-webkit-text-stroke:0.35px #4b8186;">237962</div>
<div class="c" style="left:2162px;top:556px;width:184px;font-size:24px;line-height:24px;color:#4b8186;font-weight:bold;letter-spacing:2px;-webkit-text-stroke:0.35px #4b8186;">6.04%</div>
<div class="c" style="left:830px;top:625px;width:142px;font-size:25px;line-height:24px;color:#2a2e34;font-weight:normal;letter-spacing:0.9px;">2020-03</div>
<div class="c" style="left:974px;top:625px;width:174px;font-size:25px;line-height:24px;color:#2a2e34;font-weight:normal;letter-spacing:0.35px;">339170.5</div>
<div class="c" style="left:1150px;top:625px;width:184px;font-size:25px;line-height:24px;color:#2a2e34;font-weight:normal;letter-spacing:0.35px;">7.38%</div>
<div class="c" style="left:1336px;top:625px;width:142px;font-size:25px;line-height:24px;color:#2a2e34;font-weight:normal;letter-spacing:0.35px;">30855.5</div>
<div class="c" style="left:1480px;top:625px;width:184px;font-size:25px;line-height:24px;color:#2a2e34;font-weight:normal;letter-spacing:0.35px;">1.32%</div>
<div class="c" style="left:1666px;top:625px;width:138px;font-size:25px;line-height:24px;color:#2a2e34;font-weight:normal;letter-spacing:0.35px;">26360</div>
<div class="c" style="left:1806px;top:625px;width:184px;font-size:25px;line-height:24px;color:#2a2e34;font-weight:normal;letter-spacing:0.35px;">0.57%</div>
<div class="c" style="left:1992px;top:626px;width:168px;font-size:24px;line-height:24px;color:#4b8186;font-weight:bold;letter-spacing:2px;-webkit-text-stroke:0.35px #4b8186;">396386</div>
<div class="c" style="left:2162px;top:626px;width:184px;font-size:24px;line-height:24px;color:#4b8186;font-weight:bold;letter-spacing:2px;-webkit-text-stroke:0.35px #4b8186;">9.27%</div>
<div class="c" style="left:830px;top:695px;width:142px;font-size:25px;line-height:24px;color:#2a2e34;font-weight:normal;letter-spacing:0.9px;">2020-04</div>
<div class="c" style="left:974px;top:695px;width:174px;font-size:25px;line-height:24px;color:#2a2e34;font-weight:normal;letter-spacing:0.35px;">114968</div>
<div class="c" style="left:1150px;top:695px;width:184px;font-size:25px;line-height:24px;color:#2a2e34;font-weight:normal;letter-spacing:0.35px;">4.42%</div>
<div class="c" style="left:1336px;top:695px;width:142px;font-size:25px;line-height:24px;color:#2a2e34;font-weight:normal;letter-spacing:0.35px;">33779.5</div>
<div class="c" style="left:1480px;top:695px;width:184px;font-size:25px;line-height:24px;color:#2a2e34;font-weight:normal;letter-spacing:0.35px;">1.66%</div>
<div class="c" style="left:1666px;top:695px;width:138px;font-size:25px;line-height:24px;color:#2a2e34;font-weight:normal;letter-spacing:0.35px;">10412.5</div>
<div class="c" style="left:1806px;top:695px;width:184px;font-size:25px;line-height:24px;color:#2a2e34;font-weight:normal;letter-spacing:0.35px;">0.72%</div>
<div class="c" style="left:1992px;top:696px;width:168px;font-size:24px;line-height:24px;color:#4b8186;font-weight:bold;letter-spacing:2px;-webkit-text-stroke:0.35px #4b8186;">159160</div>
<div class="c" style="left:2162px;top:696px;width:184px;font-size:24px;line-height:24px;color:#4b8186;font-weight:bold;letter-spacing:2px;-webkit-text-stroke:0.35px #4b8186;">6.81%</div>
<div class="c" style="left:830px;top:765px;width:142px;font-size:25px;line-height:24px;color:#2a2e34;font-weight:normal;letter-spacing:0.9px;">2020-05</div>
<div class="c" style="left:974px;top:765px;width:174px;font-size:25px;line-height:24px;color:#2a2e34;font-weight:normal;letter-spacing:0.35px;">97868</div>
<div class="c" style="left:1150px;top:765px;width:184px;font-size:25px;line-height:24px;color:#2a2e34;font-weight:normal;letter-spacing:0.35px;">3.99%</div>
<div class="c" style="left:1336px;top:765px;width:142px;font-size:25px;line-height:24px;color:#2a2e34;font-weight:normal;letter-spacing:0.35px;">48098</div>
<div class="c" style="left:1480px;top:765px;width:184px;font-size:25px;line-height:24px;color:#2a2e34;font-weight:normal;letter-spacing:0.35px;">1.66%</div>
<div class="c" style="left:1666px;top:765px;width:138px;font-size:25px;line-height:24px;color:#2a2e34;font-weight:normal;letter-spacing:0.35px;">71609</div>
<div class="c" style="left:1806px;top:765px;width:184px;font-size:25px;line-height:24px;color:#2a2e34;font-weight:normal;letter-spacing:0.35px;">1.98%</div>
<div class="c" style="left:1992px;top:766px;width:168px;font-size:24px;line-height:24px;color:#4b8186;font-weight:bold;letter-spacing:2px;-webkit-text-stroke:0.35px #4b8186;">217575</div>
<div class="c" style="left:2162px;top:766px;width:184px;font-size:24px;line-height:24px;color:#4b8186;font-weight:bold;letter-spacing:2px;-webkit-text-stroke:0.35px #4b8186;">7.62%</div>
<div class="c" style="left:830px;top:835px;width:142px;font-size:25px;line-height:24px;color:#2a2e34;font-weight:normal;letter-spacing:0.9px;">2020-06</div>
<div class="c" style="left:974px;top:835px;width:174px;font-size:25px;line-height:24px;color:#2a2e34;font-weight:normal;letter-spacing:0.35px;">258683.5</div>
<div class="c" style="left:1150px;top:835px;width:184px;font-size:25px;line-height:24px;color:#2a2e34;font-weight:normal;letter-spacing:0.35px;">6.10%</div>
<div class="c" style="left:1336px;top:835px;width:142px;font-size:25px;line-height:24px;color:#2a2e34;font-weight:normal;letter-spacing:0.35px;">47432</div>
<div class="c" style="left:1480px;top:835px;width:184px;font-size:25px;line-height:24px;color:#2a2e34;font-weight:normal;letter-spacing:0.35px;">2.13%</div>
<div class="c" style="left:1666px;top:835px;width:138px;font-size:25px;line-height:24px;color:#2a2e34;font-weight:normal;letter-spacing:0.35px;">59677.5</div>
<div class="c" style="left:1806px;top:835px;width:184px;font-size:25px;line-height:24px;color:#2a2e34;font-weight:normal;letter-spacing:0.35px;">2.02%</div>
<div class="c" style="left:1992px;top:836px;width:168px;font-size:24px;line-height:24px;color:#4b8186;font-weight:bold;letter-spacing:2px;-webkit-text-stroke:0.35px #4b8186;">365793</div>
<div class="c" style="left:2162px;top:836px;width:184px;font-size:24px;line-height:24px;color:#4b8186;font-weight:bold;letter-spacing:2px;-webkit-text-stroke:0.35px #4b8186;">10.24%</div>
<div class="c" style="left:830px;top:905px;width:142px;font-size:25px;line-height:24px;color:#2a2e34;font-weight:normal;letter-spacing:0.9px;">2020-07</div>
<div class="c" style="left:974px;top:905px;width:174px;font-size:25px;line-height:24px;color:#2a2e34;font-weight:normal;letter-spacing:0.35px;">178962.5</div>
<div class="c" style="left:1150px;top:905px;width:184px;font-size:25px;line-height:24px;color:#2a2e34;font-weight:normal;letter-spacing:0.35px;">6.73%</div>
<div class="c" style="left:1336px;top:905px;width:142px;font-size:25px;line-height:24px;color:#2a2e34;font-weight:normal;letter-spacing:0.35px;">39975.5</div>
<div class="c" style="left:1480px;top:905px;width:184px;font-size:25px;line-height:24px;color:#2a2e34;font-weight:normal;letter-spacing:0.35px;">1.88%</div>
<div class="c" style="left:1666px;top:905px;width:138px;font-size:25px;line-height:24px;color:#2a2e34;font-weight:normal;letter-spacing:0.35px;"></div>
<div class="c" style="left:1806px;top:905px;width:184px;font-size:25px;line-height:24px;color:#2a2e34;font-weight:normal;letter-spacing:0.35px;"></div>
<div class="c" style="left:1992px;top:906px;width:168px;font-size:24px;line-height:24px;color:#4b8186;font-weight:bold;letter-spacing:2px;-webkit-text-stroke:0.35px #4b8186;">218938</div>
<div class="c" style="left:2162px;top:906px;width:184px;font-size:24px;line-height:24px;color:#4b8186;font-weight:bold;letter-spacing:2px;-webkit-text-stroke:0.35px #4b8186;">8.61%</div>
<div class="c" style="left:830px;top:975px;width:142px;font-size:25px;line-height:24px;color:#2a2e34;font-weight:normal;letter-spacing:0.9px;">2020-08</div>
<div class="c" style="left:974px;top:975px;width:174px;font-size:25px;line-height:24px;color:#2a2e34;font-weight:normal;letter-spacing:0.35px;">61001</div>
<div class="c" style="left:1150px;top:975px;width:184px;font-size:25px;line-height:24px;color:#2a2e34;font-weight:normal;letter-spacing:0.35px;">2.46%</div>
<div class="c" style="left:1336px;top:975px;width:142px;font-size:25px;line-height:24px;color:#2a2e34;font-weight:normal;letter-spacing:0.35px;">55448</div>
<div class="c" style="left:1480px;top:975px;width:184px;font-size:25px;line-height:24px;color:#2a2e34;font-weight:normal;letter-spacing:0.35px;">2.50%</div>
<div class="c" style="left:1666px;top:975px;width:138px;font-size:25px;line-height:24px;color:#2a2e34;font-weight:normal;letter-spacing:0.35px;">26913.5</div>
<div class="c" style="left:1806px;top:975px;width:184px;font-size:25px;line-height:24px;color:#2a2e34;font-weight:normal;letter-spacing:0.35px;">1.11%</div>
<div class="c" style="left:1992px;top:976px;width:168px;font-size:24px;line-height:24px;color:#4b8186;font-weight:bold;letter-spacing:2px;-webkit-text-stroke:0.35px #4b8186;">143362.5</div>
<div class="c" style="left:2162px;top:976px;width:184px;font-size:24px;line-height:24px;color:#4b8186;font-weight:bold;letter-spacing:2px;-webkit-text-stroke:0.35px #4b8186;">6.07%</div>
<div class="c" style="left:830px;top:1045px;width:142px;font-size:25px;line-height:24px;color:#2a2e34;font-weight:normal;letter-spacing:0.9px;">2020-09</div>
<div class="c" style="left:974px;top:1045px;width:174px;font-size:25px;line-height:24px;color:#2a2e34;font-weight:normal;letter-spacing:0.35px;">249826</div>
<div class="c" style="left:1150px;top:1045px;width:184px;font-size:25px;line-height:24px;color:#2a2e34;font-weight:normal;letter-spacing:0.35px;">5.64%</div>
<div class="c" style="left:1336px;top:1045px;width:142px;font-size:25px;line-height:24px;color:#2a2e34;font-weight:normal;letter-spacing:0.35px;">66122</div>
<div class="c" style="left:1480px;top:1045px;width:184px;font-size:25px;line-height:24px;color:#2a2e34;font-weight:normal;letter-spacing:0.35px;">2.64%</div>
<div class="c" style="left:1666px;top:1045px;width:138px;font-size:25px;line-height:24px;color:#2a2e34;font-weight:normal;letter-spacing:0.35px;">84504</div>
<div class="c" style="left:1806px;top:1045px;width:184px;font-size:25px;line-height:24px;color:#2a2e34;font-weight:normal;letter-spacing:0.35px;">2.35%</div>
<div class="c" style="left:1992px;top:1046px;width:168px;font-size:24px;line-height:24px;color:#4b8186;font-weight:bold;letter-spacing:2px;-webkit-text-stroke:0.35px #4b8186;">400452</div>
<div class="c" style="left:2162px;top:1046px;width:184px;font-size:24px;line-height:24px;color:#4b8186;font-weight:bold;letter-spacing:2px;-webkit-text-stroke:0.35px #4b8186;">10.63%</div>
</body></html>
